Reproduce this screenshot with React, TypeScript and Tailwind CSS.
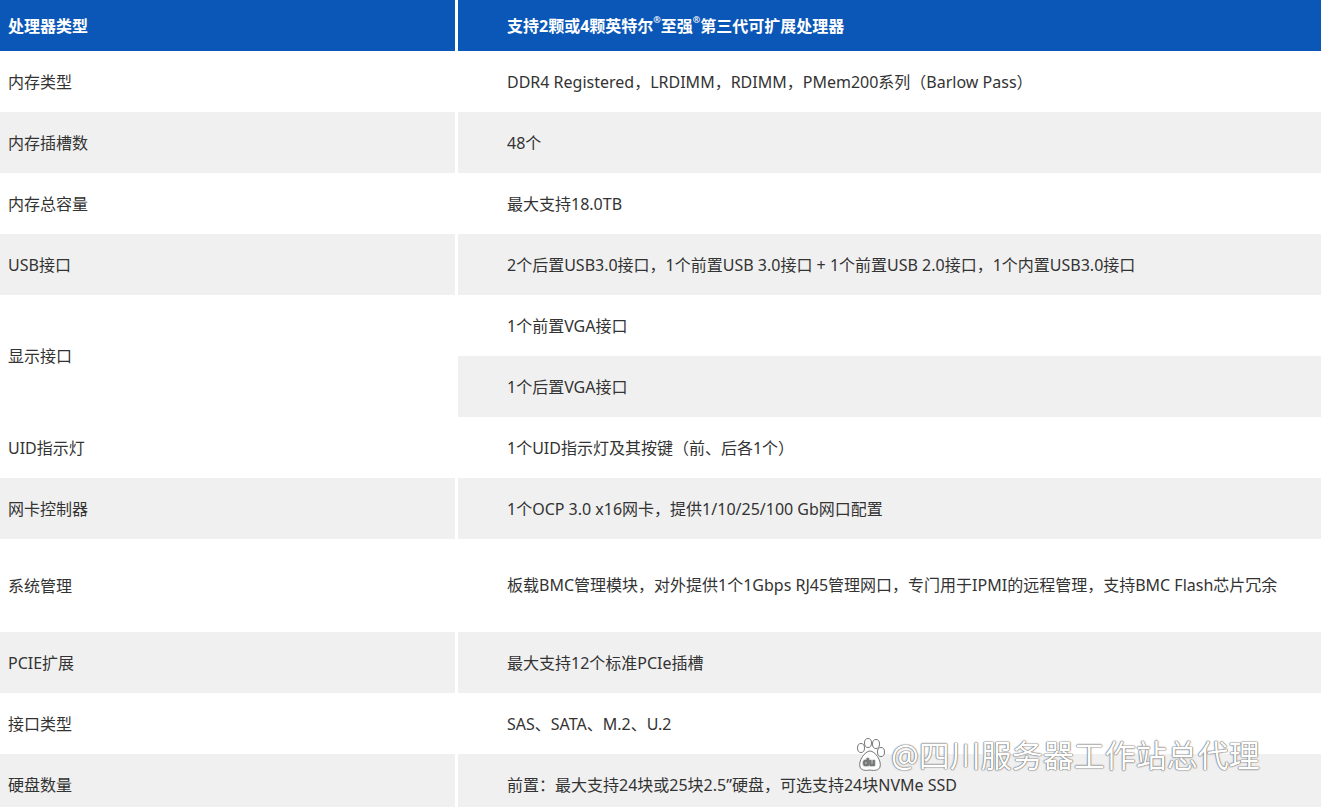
import React from "react";

const G = "bg-[#f0f0f0]";
const W = "bg-white";

function Row({ l, r, bg, h = "h-[61px]" }: { l: React.ReactNode; r: React.ReactNode; bg: string; h?: string }) {
  return (
    <>
      <div className={`${bg} ${h} flex items-center pl-2`}>{l}</div>
      <div className={`${bg} ${h} flex items-center pl-[49px] pr-2`}>{r}</div>
    </>
  );
}

export default function App() {
  return (
    <div
      className="relative w-[1321px] h-[807px] overflow-hidden bg-white text-[#333] text-[16px]"
      style={{ fontFamily: '"Noto Sans", "Noto Sans CJK SC", sans-serif' }}
    >
      <div className="grid grid-cols-[455px_1fr] gap-x-[3px]">
        <div className="bg-[#0b57b7] h-[51px] flex items-center pl-2 text-white font-bold">处理器类型</div>
        <div className="bg-[#0b57b7] h-[51px] flex items-center pl-[49px] text-white font-bold">
          支持2颗或4颗英特尔<sup className="text-[9px] -top-[6px]">®</sup>至强<sup className="text-[9px] -top-[6px]">®</sup>第三代可扩展处理器
        </div>
        <Row bg={W} l="内存类型" r="DDR4 Registered，LRDIMM，RDIMM，PMem200系列（Barlow Pass）" />
        <Row bg={G} l="内存插槽数" r="48个" />
        <Row bg={W} l="内存总容量" r="最大支持18.0TB" />
        <Row bg={G} l="USB接口" r="2个后置USB3.0接口，1个前置USB 3.0接口 + 1个前置USB 2.0接口，1个内置USB3.0接口" />
        <div className={`${W} row-span-2 flex items-center pl-2`}>显示接口</div>
        <div className={`${W} h-[61px] flex items-center pl-[49px]`}>1个前置VGA接口</div>
        <div className={`${G} h-[61px] flex items-center pl-[49px]`}>1个后置VGA接口</div>
        <Row bg={W} l="UID指示灯" r="1个UID指示灯及其按键（前、后各1个）" />
        <Row bg={G} l="网卡控制器" r="1个OCP 3.0 x16网卡，提供1/10/25/100 Gb网口配置" />
        <Row
          bg={W}
          h="h-[93px]"
          l="系统管理"
          r={<span className="leading-[31px]">板载BMC管理模块，对外提供1个1Gbps RJ45管理网口，专门用于IPMI的远程管理，支持BMC Flash芯片冗余</span>}
        />
        <Row bg={G} l="PCIE扩展" r="最大支持12个标准PCIe插槽" />
        <Row bg={W} l="接口类型" r="SAS、SATA、M.2、U.2" />
        <Row bg={G} l="硬盘数量" r="前置：最大支持24块或25块2.5”硬盘，可选支持24块NVMe SSD" />
      </div>
      <div
        className="absolute left-[853px] top-[738px] flex items-center gap-1 text-white text-[31px] leading-none"
        style={{ textShadow: "0 0 1px #666, 0 0 1px #666, 0 0 2px #888" }}
      >
        <svg width="34" height="34" viewBox="0 0 34 34">
          <g fill="white" stroke="#777" strokeWidth="1">
            <ellipse cx="8" cy="10" rx="3.5" ry="4.5" />
            <ellipse cx="15" cy="5" rx="3.5" ry="4.5" />
            <ellipse cx="23" cy="6" rx="3.5" ry="4.5" />
            <ellipse cx="28" cy="14" rx="3.5" ry="4.5" />
            <path d="M17 13c-5 0-12 10-10 16 1 3 5 4 10 3 5 1 9 0 10-3 2-6-5-16-10-16z" />
          </g>
          <text x="10" y="28" fontSize="10" fill="#777" fontFamily="Liberation Sans, sans-serif" fontWeight="bold">du</text>
        </svg>
        <span>@四川服务器工作站总代理</span>
      </div>
    </div>
  );
}
